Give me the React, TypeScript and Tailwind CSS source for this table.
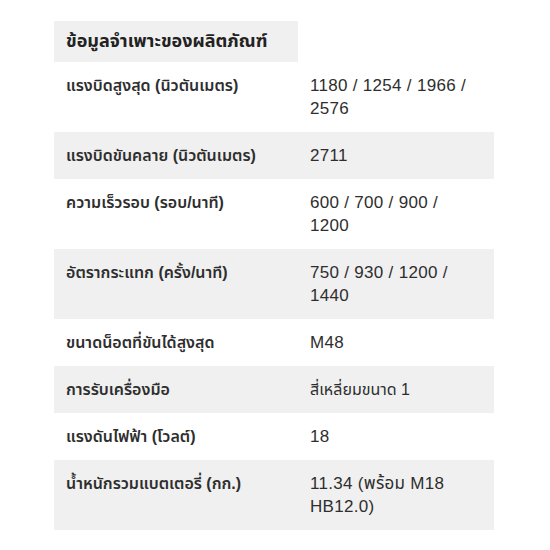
import React from "react";

const rows: [string, string, boolean][] = [
  ["แรงบิดสูงสุด (นิวตันเมตร)", "1180 / 1254 / 1966 / 2576", true],
  ["แรงบิดขันคลาย (นิวตันเมตร)", "2711", true],
  ["ความเร็วรอบ (รอบ/นาที)", "600 / 700 / 900 / 1200", true],
  ["อัตรากระแทก (ครั้ง/นาที)", "750 / 930 / 1200 / 1440", true],
  ["ขนาดน็อตที่ขันได้สูงสุด", "M48", true],
  ["การรับเครื่องมือ", "สี่เหลี่ยมขนาด 1", false],
  ["แรงดันไฟฟ้า (โวลต์)", "18", true],
  ["น้ำหนักรวมแบตเตอรี่ (กก.)", "11.34 (พร้อม M18 HB12.0)", true],
];

export default function App() {
  return (
    <div
      className="w-[550px] h-[550px] bg-white pt-[21px] pl-[54px] text-[#2e2e2e]"
      style={{ fontFamily: '"Liberation Sans", "Noto Sans Thai", "Noto Sans", sans-serif' }}
    >
      <div className="w-[440px]">
        <div className="w-[244px] h-[41px] bg-[#f0f0f0] px-3 flex items-center">
          <span className="text-[18px] font-bold text-[#222222]">ข้อมูลจำเพาะของผลิตภัณฑ์</span>
        </div>
        {rows.map(([k, v, sp], i) => (
          <div key={i} className={`flex ${i % 2 === 1 ? "bg-[#f0f0f0]" : "bg-white"}`}>
            <div className="w-[244px] px-3 py-3 text-[16px] leading-[23px] font-semibold">{k}</div>
            <div
              className={`w-[196px] pl-3 pr-4 py-3 leading-[23px] ${
                sp ? "text-[17px] tracking-[0.3px]" : "text-[16px] tracking-normal"
              }`}
            >
              {v}
            </div>
          </div>
        ))}
      </div>
    </div>
  );
}
